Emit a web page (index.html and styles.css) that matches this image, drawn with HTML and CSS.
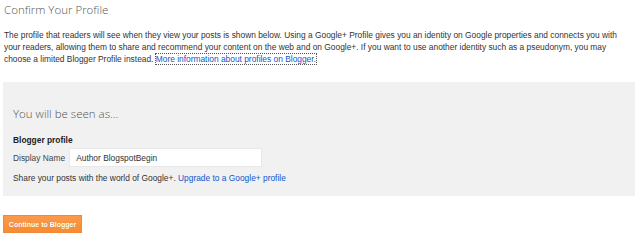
FILE: index.html
```html
<!DOCTYPE html>
<html lang="en">
<head>
  <meta charset="UTF-8" />
  <title>Confirm Your Profile - Blogger</title>
  <link rel="stylesheet" href="styles.css">
</head>
<body>
  <h1 class="page-title">Confirm Your Profile</h1>

  <p class="intro">
    The profile that readers will see when they view your posts is shown below. Using a Google+ Profile gives you an identity on Google properties and connects you with your readers, allowing them to share and recommend your content on the web and on Google+. If you want to use another identity such as a pseudonym, you may choose a limited Blogger Profile instead. <a href="#" class="focused">More information about profiles on Blogger.</a>
  </p>

  <div class="panel">
    <h2 class="panel-title">You will be seen as...</h2>
    <div class="profile-type">Blogger profile</div>
    <div class="field">
      <label for="displayName">Display Name</label>
      <input type="text" id="displayName" value="Author BlogspotBegin">
    </div>
    <p class="share">Share your posts with the world of Google+. <a href="#">Upgrade to a Google+ profile</a></p>
  </div>

  <button class="btn">Continue to Blogger</button>
</body>
</html>
```

FILE: styles.css
```css
body {
  font-family: Arial, "Liberation Sans", sans-serif;
  font-size: 8.4px;
  color: #333;
  margin: 0;
  padding: 3px 5px 0 3px;
  background: #fff;
}
a { color: #15c; text-decoration: none; }
a.focused { outline: 1px dotted #555; }

.page-title {
  font-family: "Open Sans", sans-serif;
  font-weight: 300;
  font-size: 11.5px;
  color: #555;
  margin: 0 0 12px 1px;
  line-height: 14px;
}
.intro {
  max-width: 616px;
  margin: 0 0 0 1px;
  line-height: 12px;
}

.panel {
  background: #f1f1f1;
  margin-top: 17px;
  padding: 25px 10px 12px 10px;
}
.panel-title {
  font-family: "Open Sans", sans-serif;
  font-weight: 300;
  font-size: 11.5px;
  color: #555;
  margin: 0 0 13px 0;
  line-height: 14px;
}
.profile-type {
  font-weight: bold;
  color: #222;
  line-height: 12px;
  margin-bottom: 2px;
}
.field {
  display: flex;
  align-items: center;
  gap: 4px;
}
.field label { color: #444; }
.field input {
  width: 193px;
  height: 19px;
  box-sizing: border-box;
  padding: 0 6px;
  border: 1px solid #e8e8e8;
  background: #fff;
  font-family: Arial, "Liberation Sans", sans-serif;
  font-size: 8.4px;
  color: #333;
}
.share {
  margin: 5px 0 0 0;
  line-height: 12px;
}

.btn {
  display: block;
  margin-top: 19px;
  width: 79px;
  height: 18px;
  padding: 0;
  background: #f8913d;
  background-image: linear-gradient(#fb9a4c, #f78b31);
  color: #fff;
  font-family: Arial, "Liberation Sans", sans-serif;
  font-size: 7px;
  font-weight: bold;
  text-shadow: 0 0 1px rgba(0, 0, 0, 0.15);
  border: 1px solid #f3883b;
  cursor: pointer;
}
```
